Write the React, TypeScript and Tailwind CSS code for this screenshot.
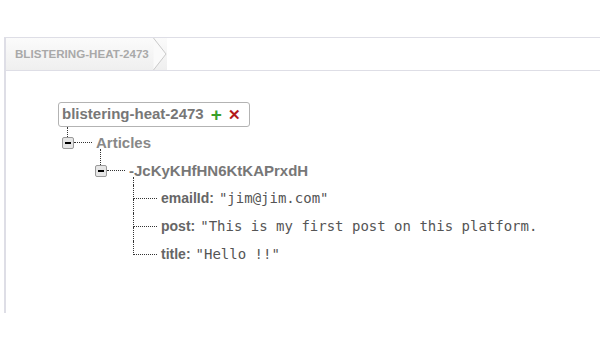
import React from "react";

type Leaf = { key: string; value: string };

const LEAVES: Leaf[] = [
  { key: "emailId", value: '"jim@jim.com"' },
  { key: "post", value: '"This is my first post on this platform.' },
  { key: "title", value: '"Hello !!"' },
];

const sans = "font-['Liberation_Sans',Arial,sans-serif]";
const mono = "font-['DejaVu_Sans_Mono',monospace]";

function MinusBox() {
  return (
    <div className="flex h-[12px] w-[12px] shrink-0 items-center justify-center rounded-[2px] border border-[#9a9a9a] bg-[#e6e6e6]">
      <div className="h-[2px] w-[6px] bg-black" />
    </div>
  );
}

function LeafRow({ leaf, last }: { leaf: Leaf; last: boolean }) {
  return (
    <div className="flex h-[28px] items-center">
      <div className="flex h-full w-[24px] shrink-0 flex-col">
        <div className="h-[14px] border-b border-l border-dotted border-[#333]" />
        <div className={`h-[14px] ${last ? "" : "border-l border-dotted border-[#333]"}`} />
      </div>
      <span className={`ml-[4px] ${sans} text-[14px] font-bold text-[#666]`}>{leaf.key}:</span>
      <span className={`ml-[5px] whitespace-pre ${mono} text-[14px] text-[#555]`}>{leaf.value}</span>
    </div>
  );
}

export default function App() {
  return (
    <div className="h-[350px] w-[600px] overflow-hidden bg-white pt-[37px]">
      <div className="ml-[4px] h-[276px] border-l-2 border-t border-[#dedee6]">
        {/* breadcrumb header */}
        <div className="flex h-[33px] items-stretch border-b border-[#dedee6] bg-gradient-to-b from-[#fbfbfb] to-[#efefef]">
          <div className={`flex items-center pl-[9px] pr-[4px] ${sans} text-[11.6px] font-bold text-[#a9a9a9]`}>
            BLISTERING-HEAT-2473
          </div>
          <svg width="14" height="32" viewBox="0 0 14 32" className="shrink-0">
            <polyline points="0.5,0 13,16 0.5,32" fill="#fafafa" stroke="#c9c9c9" strokeWidth="1" />
          </svg>
          <div className="flex-1 bg-white" />
        </div>

        {/* tree */}
        <div className="pl-[52px] pt-[30px]">
          <div className="inline-flex h-[25px] items-center rounded-[3px] border border-[#b3b3b3] pl-[3px] pr-[8px]">
            <span className={`${sans} text-[15px] font-bold text-[#777]`}>blistering-heat-2473</span>
            <span className={`ml-[7px] ${sans} text-[19px] font-black leading-none text-[#3aa02b]`}>+</span>
            <span className={`ml-[6px] ${sans} text-[15px] font-bold leading-none text-[#b3181b]`}>✕</span>
          </div>

          <div className="ml-[4px]">
            <div className="ml-[5px] h-[10px] border-l border-dotted border-[#333]" />
            <div className="flex h-[12px] items-center">
              <MinusBox />
              <div className="w-[18px] border-t border-dotted border-[#333]" />
              <span className={`ml-[4px] ${sans} text-[15px] font-bold text-[#888]`}>Articles</span>
            </div>

            <div className="ml-[33px]">
              <div className="ml-[5px] h-[16px] border-l border-dotted border-[#333]" />
              <div className="flex h-[12px] items-center">
                <MinusBox />
                <div className="w-[18px] border-t border-dotted border-[#333]" />
                <span className={`ml-[4px] ${sans} text-[15px] font-bold text-[#777]`}>-JcKyKHfHN6KtKAPrxdH</span>
              </div>

              <div className="ml-[38px]">
                <div className="h-[8px] border-l border-dotted border-[#333]" />
                {LEAVES.map((leaf, idx) => (
                  <LeafRow key={leaf.key} leaf={leaf} last={idx === LEAVES.length - 1} />
                ))}
              </div>
            </div>
          </div>
        </div>
      </div>
    </div>
  );
}
